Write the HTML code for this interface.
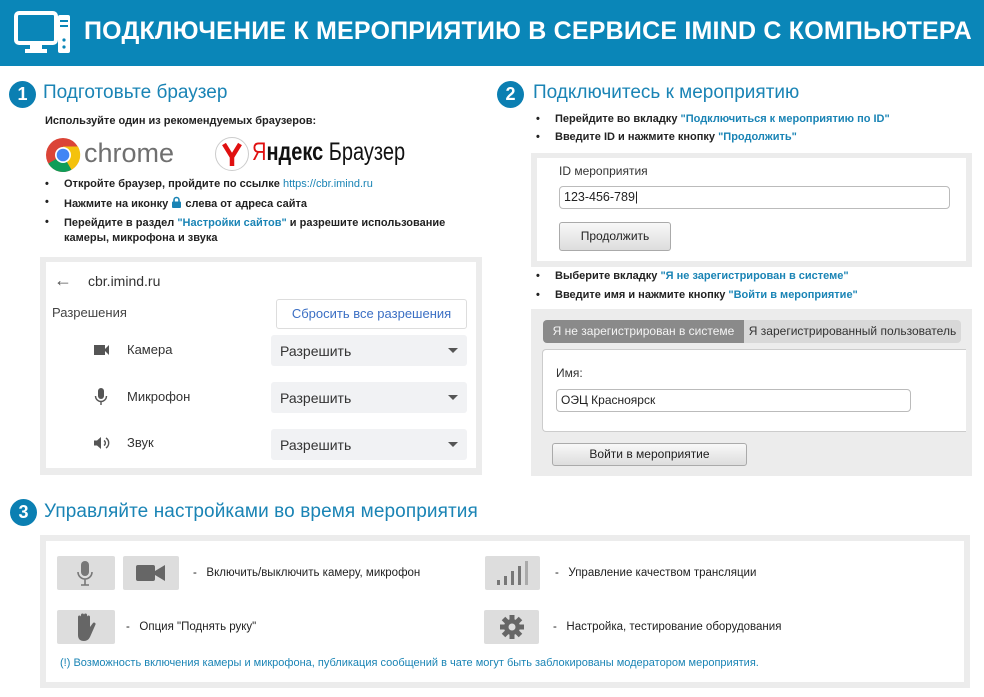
<!DOCTYPE html>
<html><head><meta charset="utf-8"><style>
*{margin:0;padding:0;box-sizing:border-box}
body{width:984px;height:697px;background:#fff;font-family:"Liberation Sans","Noto Sans CJK SC",sans-serif;position:relative;overflow:hidden;color:#222}
.a{position:absolute;white-space:nowrap}
.hdr{left:0;top:0;width:984px;height:66px;background:#0a86b8}
.ttl{left:84px;top:17px;color:#fff;font-size:25px;font-weight:bold;letter-spacing:.2px}
.num{width:27px;height:27px;border-radius:50%;background:#0b7fb2;color:#fff;font-weight:bold;font-size:18px;text-align:center;line-height:27px}
.h{color:#1a84b5;font-size:19px}
.t{font-size:11px;font-weight:bold;color:#222}
.b{color:#1a84b5}
.dot{font-size:11px;font-weight:bold}
.gbox{background:#ececec}
.wbox{background:#fff}
.sel{background:#f1f2f4;border-radius:3px;height:31px;font-size:14px;color:#333;padding:8px 9px}
.sel:after{content:"";position:absolute;right:9px;top:13px;border:5px solid transparent;border-top:5px solid #555}
.inp{border:1px solid #bbb;border-radius:4px;background:#fff;font-size:12px;padding:3px 4px}
.btn{border:1px solid #aaa;border-radius:3px;background:linear-gradient(#f8f8f8,#ddd);font-size:12px;text-align:center}
.ic{background:#ddd;border-radius:2px;width:55px;height:34px}
.s3{font-size:11.5px;color:#222}
</style></head><body>
<div class="a hdr"></div>
<svg class="a" style="left:14px;top:10px" width="58" height="46" viewBox="0 0 58 46">
<rect x="2" y="3" width="40" height="30" rx="3" fill="none" stroke="#fff" stroke-width="4"/>
<rect x="16" y="33" width="12" height="6" fill="#fff"/><rect x="11" y="39" width="22" height="4" fill="#fff"/>
<rect x="44" y="5" width="12" height="38" rx="2" fill="#fff"/>
<rect x="46" y="10" width="8" height="2" fill="#0a86b8"/><rect x="46" y="15" width="8" height="2" fill="#0a86b8"/>
<circle cx="50" cy="37" r="1.6" fill="#0a86b8"/><circle cx="50" cy="30" r="1.6" fill="#0a86b8"/>
</svg>
<div class="a ttl">ПОДКЛЮЧЕНИЕ К МЕРОПРИЯТИЮ В СЕРВИСЕ IMIND С КОМПЬЮТЕРА</div>

<div class="a num" style="left:9px;top:81px">1</div>
<div class="a h" style="left:43px;top:82px">Подготовьте браузер</div>
<div class="a t" style="left:45px;top:115px">Используйте один из рекомендуемых браузеров:</div>
<svg class="a" style="left:45px;top:137px" width="36" height="36" viewBox="0 0 36 36">
<circle cx="18" cy="18" r="17" fill="#db4437"/>
<path d="M18 18 L3.3 26.5 A17 17 0 0 0 26.5 32.7Z" fill="#0f9d58"/>
<path d="M18 18 L26.5 32.7 A17 17 0 0 0 33 9.5 L18 9.5Z" fill="#f4c20d"/>
<circle cx="18" cy="18" r="8" fill="#fff"/><circle cx="18" cy="18" r="6.3" fill="#4285f4"/></svg>
<div class="a" style="left:84px;top:138px;font-size:27px;color:#707070">chrome</div>
<svg class="a" style="left:214px;top:136px" width="36" height="36" viewBox="0 0 36 36"><circle cx="18" cy="18" r="16.5" fill="#fff" stroke="#ccc"/>
<path d="M10 8 L18 21 L26 8 M18 21 V30" fill="none" stroke="#e01010" stroke-width="4.5"/></svg>
<div class="a" style="left:252px;top:138px;font-size:25px;color:#111;transform:scaleX(.8);transform-origin:left"><span style="color:#e01010">Я</span><b>ндекс</b> Браузер</div>
<div class="a dot" style="left:45px;top:178px">•</div><div class="a t" style="left:64px;top:178px">Откройте браузер, пройдите по ссылке <span class="b" style="font-weight:normal">https://cbr.imind.ru</span></div>
<div class="a dot" style="left:45px;top:196px">•</div><div class="a t" style="left:64px;top:196px">Нажмите на иконку <svg width="11" height="12" viewBox="0 0 11 12" style="vertical-align:-1px"><path d="M3 6 V4 a2.5 2.5 0 0 1 5 0 V6" fill="none" stroke="#1a84b5" stroke-width="1.6"/><rect x="1" y="5.5" width="9" height="6.5" rx="1" fill="#1a84b5"/></svg> слева от адреса сайта</div>
<div class="a dot" style="left:45px;top:216px">•</div><div class="a t" style="left:64px;top:216px;line-height:15px">Перейдите в раздел <span class="b">"Настройки сайтов"</span> и разрешите использование<br>камеры, микрофона и звука</div>

<div class="a gbox" style="left:40px;top:257px;width:442px;height:218px"></div>
<div class="a wbox" style="left:46px;top:262px;width:430px;height:206px"></div>
<div class="a" style="left:54px;top:270px;font-size:18px;color:#555">&#8592;</div>
<div class="a" style="left:88px;top:273px;font-size:14px;color:#333">cbr.imind.ru</div>
<div class="a" style="left:52px;top:305px;font-size:13px;color:#444">Разрешения</div>
<div class="a" style="left:276px;top:299px;width:191px;height:30px;border:1px solid #ddd;border-radius:3px;font-size:13px;color:#3b6fc4;text-align:center;line-height:28px">Сбросить все разрешения</div>
<div class="a" style="left:94px;top:345px;width:11px;height:10px;background:#555"></div><div class="a" style="left:104px;top:345px;border:5px solid transparent;border-right:5px solid #555;border-left:0"></div>
<div class="a" style="left:127px;top:342px;font-size:13px;color:#333">Камера</div>
<div class="a sel" style="left:271px;top:335px;width:196px">Разрешить</div>
<svg class="a" style="left:94px;top:388px" width="14" height="18" viewBox="0 0 14 18"><rect x="4" y="0" width="6" height="11" rx="3" fill="#555"/><path d="M1.5 8 a5.5 5.5 0 0 0 11 0 M7 13.5 V17" fill="none" stroke="#555" stroke-width="1.4"/></svg>
<div class="a" style="left:127px;top:389px;font-size:13px;color:#333">Микрофон</div>
<div class="a sel" style="left:271px;top:382px;width:196px">Разрешить</div>
<svg class="a" style="left:93px;top:436px" width="18" height="14" viewBox="0 0 18 14"><path d="M1 4.5 H4 L8 1 V13 L4 9.5 H1Z" fill="#555"/><path d="M11 4.5 a3 3 0 0 1 0 5 M13 2 a6 6 0 0 1 0 10" fill="none" stroke="#555" stroke-width="1.4"/></svg>
<div class="a" style="left:127px;top:435px;font-size:13px;color:#333">Звук</div>
<div class="a sel" style="left:271px;top:429px;width:196px">Разрешить</div>

<div class="a num" style="left:497px;top:81px">2</div>
<div class="a h" style="left:533px;top:82px">Подключитесь к мероприятию</div>
<div class="a dot" style="left:536px;top:113px">•</div><div class="a t" style="left:555px;top:113px">Перейдите во вкладку <span class="b">"Подключиться к мероприятию по ID"</span></div>
<div class="a dot" style="left:536px;top:131px">•</div><div class="a t" style="left:555px;top:131px">Введите ID и нажмите кнопку <span class="b">"Продолжить"</span></div>
<div class="a gbox" style="left:531px;top:153px;width:441px;height:114px"></div>
<div class="a wbox" style="left:537px;top:158px;width:429px;height:103px"></div>
<div class="a" style="left:559px;top:164px;font-size:12px;color:#333">ID мероприятия</div>
<div class="a inp" style="left:559px;top:186px;width:391px;height:23px;font-size:12.5px">123-456-789|</div>
<div class="a btn" style="left:559px;top:222px;width:112px;height:29px;line-height:27px">Продолжить</div>
<div class="a dot" style="left:536px;top:270px">•</div><div class="a t" style="left:555px;top:270px">Выберите вкладку <span class="b">"Я не зарегистрирован в системе"</span></div>
<div class="a dot" style="left:536px;top:289px">•</div><div class="a t" style="left:555px;top:289px">Введите имя и нажмите кнопку <span class="b">"Войти в мероприятие"</span></div>
<div class="a gbox" style="left:531px;top:309px;width:441px;height:167px"></div>
<div class="a" style="left:543px;top:320px;width:201px;height:23px;background:#8a8a8a;border-radius:4px 0 0 4px;color:#f4f4f4;font-size:12px;line-height:23px;text-align:center">Я не зарегистрирован в системе</div>
<div class="a" style="left:744px;top:320px;width:217px;height:23px;background:#d8d8d8;border-radius:0 4px 4px 0;color:#333;font-size:12px;line-height:23px;text-align:center">Я зарегистрированный пользователь</div>
<div class="a wbox" style="left:542px;top:349px;width:424px;height:83px;border:1px solid #ccc;border-right:0;border-radius:4px 0 0 4px"></div>
<div class="a" style="left:556px;top:366px;font-size:12px;color:#333">Имя:</div>
<div class="a inp" style="left:556px;top:389px;width:355px;height:23px">ОЭЦ Красноярск</div>
<div class="a btn" style="left:552px;top:443px;width:195px;height:23px;line-height:21px">Войти в мероприятие</div>

<div class="a num" style="left:10px;top:499px">3</div>
<div class="a h" style="left:44px;top:501px;font-size:19px;letter-spacing:.1px">Управляйте настройками во время мероприятия</div>
<div class="a gbox" style="left:40px;top:535px;width:930px;height:153px"></div>
<div class="a wbox" style="left:46px;top:541px;width:918px;height:141px"></div>
<div class="a ic" style="left:57px;top:556px;width:58px"></div>
<svg class="a" style="left:75px;top:560px" width="20" height="28" viewBox="0 0 20 28"><rect x="6" y="1" width="8" height="15" rx="4" fill="#777"/><path d="M3 12 a7 7 0 0 0 14 0 M10 19 V25 M6 25 H14" fill="none" stroke="#777" stroke-width="1.6"/></svg>
<div class="a ic" style="left:123px;top:556px;width:56px"></div>
<svg class="a" style="left:135px;top:563px" width="32" height="20" viewBox="0 0 32 20"><rect x="1" y="2" width="19" height="16" rx="2" fill="#666"/><path d="M20 8 L30 2 V18 L20 12Z" fill="#666"/></svg>
<div class="a s3" style="left:193px;top:567px">-&nbsp;&nbsp; Включить/выключить камеру, микрофон</div>
<div class="a ic" style="left:485px;top:556px;width:55px"></div>
<svg class="a" style="left:496px;top:560px" width="34" height="26" viewBox="0 0 34 26"><rect x="1" y="20" width="3" height="5" fill="#777"/><rect x="8" y="16" width="3" height="9" fill="#777"/><rect x="15" y="11" width="3" height="14" fill="#777"/><rect x="22" y="6" width="3" height="19" fill="#777"/><rect x="29" y="1" width="3" height="24" fill="#aaa"/></svg>
<div class="a s3" style="left:555px;top:567px">-&nbsp;&nbsp; Управление качеством трансляции</div>
<div class="a ic" style="left:57px;top:610px;width:58px"></div>
<svg class="a" style="left:74px;top:613px" width="22" height="30" viewBox="0 0 22 30"><path d="M4 10 V4 a1.5 1.5 0 0 1 3 0 V2 a1.5 1.5 0 0 1 3 0 V2 a1.5 1.5 0 0 1 3 0 V4 a1.5 1.5 0 0 1 3 0 V14 L19 10 a1.5 1.5 0 0 1 2.5 1.5 L16 24 Q14 28 10 28 Q4 28 4 22Z" fill="#666"/></svg>
<div class="a s3" style="left:126px;top:621px">-&nbsp;&nbsp; Опция "Поднять руку"</div>
<div class="a ic" style="left:484px;top:610px;width:55px"></div>
<svg class="a" style="left:499px;top:614px" width="26" height="26" viewBox="0 0 26 26"><g fill="#666" transform="translate(13 13)"><circle r="8"/><rect x="-2.5" y="-12" width="5" height="24"/><rect x="-2.5" y="-12" width="5" height="24" transform="rotate(45)"/><rect x="-2.5" y="-12" width="5" height="24" transform="rotate(90)"/><rect x="-2.5" y="-12" width="5" height="24" transform="rotate(135)"/><circle r="3.5" fill="#ddd"/></g></svg>
<div class="a s3" style="left:553px;top:621px">-&nbsp;&nbsp; Настройка, тестирование оборудования</div>
<div class="a" style="left:60px;top:657px;font-size:11px;color:#1a84b5">(!) Возможность включения камеры и микрофона, публикация сообщений в чате могут быть заблокированы модератором мероприятия.</div>
</body></html>
